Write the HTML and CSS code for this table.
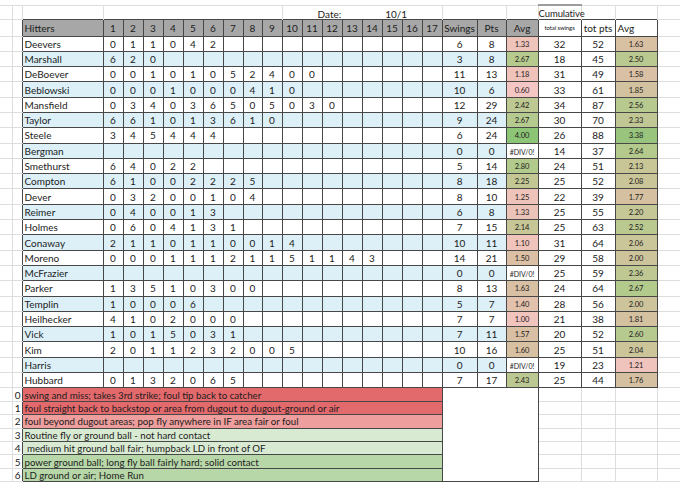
FILE: index.html
```html
<!DOCTYPE html>
<html>
<head>
<meta charset="utf-8">
<title>Hitters</title>
<link rel="stylesheet" href="styles.css">
</head>
<body>
<table class="sheet">
<colgroup>
<col class="k0"><col class="k1"><col class="kn">
<col class="kq"><col class="kq"><col class="kq"><col class="kq"><col class="kq"><col class="kq"><col class="kq"><col class="kq8"><col class="kq"><col class="kq"><col class="kq"><col class="kq"><col class="kq"><col class="kq"><col class="kq"><col class="kq"><col class="kq">
<col class="ks"><col class="kp"><col class="ka"><col class="kt"><col class="ktp"><col class="ka2"><col class="ke">
</colgroup>
<tr class="top">
<td class="t tg"></td><td class="t tg"></td><td class="t"></td><td class="t" colspan="9"></td>
<td class="t date" colspan="8"><span class="dlab">Date:</span><span class="dval">10/1</span></td>
<td class="t" colspan="2"></td><td class="t"></td><td class="t cum">Cumulative</td><td class="t"></td><td class="t"></td><td class="t te"></td>
</tr>
<tr class="hd">
<td class="g g0"></td><td class="g g1"></td><td class="nm">Hitters</td>
<td>1</td><td>2</td><td>3</td><td>4</td><td>5</td><td>6</td><td>7</td><td>8</td><td>9</td><td>10</td><td>11</td><td>12</td><td>13</td><td>14</td><td>15</td><td>16</td><td>17</td>
<td>Swings</td><td>Pts</td><td>Avg</td><td class="w tiny">total swings</td><td class="w">tot pts</td><td class="w lft">Avg</td><td class="g g9"></td>
</tr>
<tr class="r"><td class="g g0"></td><td class="g g1"></td><td class="nm">Deevers</td><td>0</td><td>1</td><td>1</td><td>0</td><td>4</td><td>2</td><td></td><td></td><td></td><td></td><td></td><td></td><td></td><td></td><td></td><td></td><td></td><td>6</td><td>8</td><td class="av" style="background:#efc4bb">1.33</td><td class="w">32</td><td class="w">52</td><td class="av" style="background:#d8c0a3">1.63</td><td class="g g9"></td></tr>
<tr class="r alt"><td class="g g0"></td><td class="g g1"></td><td class="nm">Marshall</td><td>6</td><td>2</td><td>0</td><td></td><td></td><td></td><td></td><td></td><td></td><td></td><td></td><td></td><td></td><td></td><td></td><td></td><td></td><td>3</td><td>8</td><td class="av" style="background:#b6ca8e">2.67</td><td class="w">18</td><td class="w">45</td><td class="av" style="background:#bac990">2.50</td><td class="g g9"></td></tr>
<tr class="r"><td class="g g0"></td><td class="g g1"></td><td class="nm">DeBoever</td><td>0</td><td>0</td><td>1</td><td>0</td><td>1</td><td>0</td><td>5</td><td>2</td><td>4</td><td>0</td><td>0</td><td></td><td></td><td></td><td></td><td></td><td></td><td>11</td><td>13</td><td class="av" style="background:#efc3ba">1.18</td><td class="w">31</td><td class="w">49</td><td class="av" style="background:#dac0a4">1.58</td><td class="g g9"></td></tr>
<tr class="r alt"><td class="g g0"></td><td class="g g1"></td><td class="nm">Beblowski</td><td>0</td><td>0</td><td>0</td><td>1</td><td>0</td><td>0</td><td>0</td><td>4</td><td>1</td><td>0</td><td></td><td></td><td></td><td></td><td></td><td></td><td></td><td>10</td><td>6</td><td class="av" style="background:#f4c6c4">0.60</td><td class="w">33</td><td class="w">61</td><td class="av" style="background:#d2c29f">1.85</td><td class="g g9"></td></tr>
<tr class="r"><td class="g g0"></td><td class="g g1"></td><td class="nm">Mansfield</td><td>0</td><td>3</td><td>4</td><td>0</td><td>3</td><td>6</td><td>5</td><td>0</td><td>5</td><td>0</td><td>3</td><td>0</td><td></td><td></td><td></td><td></td><td></td><td>12</td><td>29</td><td class="av" style="background:#bdc892">2.42</td><td class="w">34</td><td class="w">87</td><td class="av" style="background:#b8c98f">2.56</td><td class="g g9"></td></tr>
<tr class="r alt"><td class="g g0"></td><td class="g g1"></td><td class="nm">Taylor</td><td>6</td><td>6</td><td>1</td><td>0</td><td>1</td><td>3</td><td>6</td><td>1</td><td>0</td><td></td><td></td><td></td><td></td><td></td><td></td><td></td><td></td><td>9</td><td>24</td><td class="av" style="background:#b5ca8e">2.67</td><td class="w">30</td><td class="w">70</td><td class="av" style="background:#c0c794">2.33</td><td class="g g9"></td></tr>
<tr class="r"><td class="g g0"></td><td class="g g1"></td><td class="nm">Steele</td><td>3</td><td>4</td><td>5</td><td>4</td><td>4</td><td>4</td><td></td><td></td><td></td><td></td><td></td><td></td><td></td><td></td><td></td><td></td><td></td><td>6</td><td>24</td><td class="av" style="background:#8dc576">4.00</td><td class="w">26</td><td class="w">88</td><td class="av" style="background:#98c47d">3.38</td><td class="g g9"></td></tr>
<tr class="r alt"><td class="g g0"></td><td class="g g1"></td><td class="nm">Bergman</td><td></td><td></td><td></td><td></td><td></td><td></td><td></td><td></td><td></td><td></td><td></td><td></td><td></td><td></td><td></td><td></td><td></td><td>0</td><td>0</td><td class="av dv">#DIV/0!</td><td class="w">14</td><td class="w">37</td><td class="av" style="background:#b4ca8d">2.64</td><td class="g g9"></td></tr>
<tr class="r"><td class="g g0"></td><td class="g g1"></td><td class="nm">Smethurst</td><td>6</td><td>4</td><td>0</td><td>2</td><td>2</td><td></td><td></td><td></td><td></td><td></td><td></td><td></td><td></td><td></td><td></td><td></td><td></td><td>5</td><td>14</td><td class="av" style="background:#b2ca8c">2.80</td><td class="w">24</td><td class="w">51</td><td class="av" style="background:#c8c697">2.13</td><td class="g g9"></td></tr>
<tr class="r alt"><td class="g g0"></td><td class="g g1"></td><td class="nm">Compton</td><td>6</td><td>1</td><td>0</td><td>0</td><td>2</td><td>2</td><td>2</td><td>5</td><td></td><td></td><td></td><td></td><td></td><td></td><td></td><td></td><td></td><td>8</td><td>18</td><td class="av" style="background:#c2c794">2.25</td><td class="w">25</td><td class="w">52</td><td class="av" style="background:#cac599">2.08</td><td class="g g9"></td></tr>
<tr class="r"><td class="g g0"></td><td class="g g1"></td><td class="nm">Dever</td><td>0</td><td>3</td><td>2</td><td>0</td><td>0</td><td>1</td><td>0</td><td>4</td><td></td><td></td><td></td><td></td><td></td><td></td><td></td><td></td><td></td><td>8</td><td>10</td><td class="av" style="background:#eec3b9">1.25</td><td class="w">22</td><td class="w">39</td><td class="av" style="background:#d5c1a1">1.77</td><td class="g g9"></td></tr>
<tr class="r alt"><td class="g g0"></td><td class="g g1"></td><td class="nm">Reimer</td><td>0</td><td>4</td><td>0</td><td>0</td><td>1</td><td>3</td><td></td><td></td><td></td><td></td><td></td><td></td><td></td><td></td><td></td><td></td><td></td><td>6</td><td>8</td><td class="av" style="background:#ecc3b8">1.33</td><td class="w">25</td><td class="w">55</td><td class="av" style="background:#c5c796">2.20</td><td class="g g9"></td></tr>
<tr class="r"><td class="g g0"></td><td class="g g1"></td><td class="nm">Holmes</td><td>0</td><td>6</td><td>0</td><td>4</td><td>1</td><td>3</td><td>1</td><td></td><td></td><td></td><td></td><td></td><td></td><td></td><td></td><td></td><td></td><td>7</td><td>15</td><td class="av" style="background:#c6c696">2.14</td><td class="w">25</td><td class="w">63</td><td class="av" style="background:#b9c98f">2.52</td><td class="g g9"></td></tr>
<tr class="r alt"><td class="g g0"></td><td class="g g1"></td><td class="nm">Conaway</td><td>2</td><td>1</td><td>1</td><td>0</td><td>1</td><td>1</td><td>0</td><td>0</td><td>1</td><td>4</td><td></td><td></td><td></td><td></td><td></td><td></td><td></td><td>10</td><td>11</td><td class="av" style="background:#f0c3bb">1.10</td><td class="w">31</td><td class="w">64</td><td class="av" style="background:#cbc59a">2.06</td><td class="g g9"></td></tr>
<tr class="r"><td class="g g0"></td><td class="g g1"></td><td class="nm">Moreno</td><td>0</td><td>0</td><td>0</td><td>1</td><td>1</td><td>1</td><td>2</td><td>1</td><td>1</td><td>5</td><td>1</td><td>1</td><td>4</td><td>3</td><td></td><td></td><td></td><td>14</td><td>21</td><td class="av" style="background:#dcc0a6">1.50</td><td class="w">29</td><td class="w">58</td><td class="av" style="background:#cdc49b">2.00</td><td class="g g9"></td></tr>
<tr class="r alt"><td class="g g0"></td><td class="g g1"></td><td class="nm">McFrazier</td><td></td><td></td><td></td><td></td><td></td><td></td><td></td><td></td><td></td><td></td><td></td><td></td><td></td><td></td><td></td><td></td><td></td><td>0</td><td>0</td><td class="av dv">#DIV/0!</td><td class="w">25</td><td class="w">59</td><td class="av" style="background:#bfc893">2.36</td><td class="g g9"></td></tr>
<tr class="r"><td class="g g0"></td><td class="g g1"></td><td class="nm">Parker</td><td>1</td><td>3</td><td>5</td><td>1</td><td>0</td><td>3</td><td>0</td><td>0</td><td></td><td></td><td></td><td></td><td></td><td></td><td></td><td></td><td></td><td>8</td><td>13</td><td class="av" style="background:#d7c0a3">1.63</td><td class="w">24</td><td class="w">64</td><td class="av" style="background:#b3ca8d">2.67</td><td class="g g9"></td></tr>
<tr class="r alt"><td class="g g0"></td><td class="g g1"></td><td class="nm">Templin</td><td>1</td><td>0</td><td>0</td><td>0</td><td>6</td><td></td><td></td><td></td><td></td><td></td><td></td><td></td><td></td><td></td><td></td><td></td><td></td><td>5</td><td>7</td><td class="av" style="background:#e3c2ad">1.40</td><td class="w">28</td><td class="w">56</td><td class="av" style="background:#cdc49b">2.00</td><td class="g g9"></td></tr>
<tr class="r"><td class="g g0"></td><td class="g g1"></td><td class="nm">Heilhecker</td><td>4</td><td>1</td><td>0</td><td>2</td><td>0</td><td>0</td><td>0</td><td></td><td></td><td></td><td></td><td></td><td></td><td></td><td></td><td></td><td></td><td>7</td><td>7</td><td class="av" style="background:#f1c4be">1.00</td><td class="w">21</td><td class="w">38</td><td class="av" style="background:#d4c1a0">1.81</td><td class="g g9"></td></tr>
<tr class="r alt"><td class="g g0"></td><td class="g g1"></td><td class="nm">Vick</td><td>1</td><td>0</td><td>1</td><td>5</td><td>0</td><td>3</td><td>1</td><td></td><td></td><td></td><td></td><td></td><td></td><td></td><td></td><td></td><td></td><td>7</td><td>11</td><td class="av" style="background:#d9c0a4">1.57</td><td class="w">20</td><td class="w">52</td><td class="av" style="background:#b6c98e">2.60</td><td class="g g9"></td></tr>
<tr class="r"><td class="g g0"></td><td class="g g1"></td><td class="nm">Kim</td><td>2</td><td>0</td><td>1</td><td>1</td><td>2</td><td>3</td><td>2</td><td>0</td><td>0</td><td>5</td><td></td><td></td><td></td><td></td><td></td><td></td><td></td><td>10</td><td>16</td><td class="av" style="background:#d8c0a3">1.60</td><td class="w">25</td><td class="w">51</td><td class="av" style="background:#ccc59a">2.04</td><td class="g g9"></td></tr>
<tr class="r alt"><td class="g g0"></td><td class="g g1"></td><td class="nm">Harris</td><td></td><td></td><td></td><td></td><td></td><td></td><td></td><td></td><td></td><td></td><td></td><td></td><td></td><td></td><td></td><td></td><td></td><td>0</td><td>0</td><td class="av dv">#DIV/0!</td><td class="w">19</td><td class="w">23</td><td class="av" style="background:#efc4bc">1.21</td><td class="g g9"></td></tr>
<tr class="r"><td class="g g0"></td><td class="g g1"></td><td class="nm">Hubbard</td><td>0</td><td>1</td><td>3</td><td>2</td><td>0</td><td>6</td><td>5</td><td></td><td></td><td></td><td></td><td></td><td></td><td></td><td></td><td></td><td></td><td>7</td><td>17</td><td class="av" style="background:#bcc892">2.43</td><td class="w">25</td><td class="w">44</td><td class="av" style="background:#d5c1a1">1.76</td><td class="g g9"></td></tr>
<tr class="lg"><td class="g g0"></td><td class="ln">0</td><td class="lt l0" colspan="18">swing and miss; takes 3rd strike; foul tip back to catcher</td><td class="box" colspan="3" rowspan="7"></td><td class="lf"></td><td class="lf"></td><td class="lf"></td><td class="g g9"></td></tr>
<tr class="lg"><td class="g g0"></td><td class="ln">1</td><td class="lt l0" colspan="18">foul straight back to backstop or area from dugout to dugout-ground or air</td><td class="lf"></td><td class="lf"></td><td class="lf"></td><td class="g g9"></td></tr>
<tr class="lg"><td class="g g0"></td><td class="ln">2</td><td class="lt l2" colspan="18">foul beyond dugout areas; pop fly anywhere in IF area fair or foul</td><td class="lf"></td><td class="lf"></td><td class="lf"></td><td class="g g9"></td></tr>
<tr class="lg"><td class="g g0"></td><td class="ln">3</td><td class="lt l3" colspan="18">Routine fly or ground ball - not hard contact</td><td class="lf"></td><td class="lf"></td><td class="lf"></td><td class="g g9"></td></tr>
<tr class="lg"><td class="g g0"></td><td class="ln">4</td><td class="lt l3" colspan="18">&nbsp;medium hit ground ball fair; humpback LD in front of OF</td><td class="lf"></td><td class="lf"></td><td class="lf"></td><td class="g g9"></td></tr>
<tr class="lg"><td class="g g0"></td><td class="ln">5</td><td class="lt l5" colspan="18">power ground ball; long fly ball fairly hard; solid contact</td><td class="lf"></td><td class="lf"></td><td class="lf"></td><td class="g g9"></td></tr>
<tr class="lg"><td class="g g0"></td><td class="ln">6</td><td class="lt l5" colspan="18">LD ground or air; Home Run</td><td class="lf"></td><td class="lf"></td><td class="lf"></td><td class="g g9"></td></tr>
</table>
</body>
</html>
```

FILE: styles.css
```css
* { box-sizing: border-box; }
body {
  margin: 0;
  background: #fff;
  font-family: Lato, "Open Sans", "DejaVu Sans", sans-serif;
  color: #1c1c1c;
}
.sheet {
  border-collapse: collapse;
  table-layout: fixed;
  width: 680px;
  margin-top: 4px;
}
.sheet td {
  padding: 0;
  font-size: 10px;
  line-height: 10px;
  text-align: center;
  white-space: nowrap;
  overflow: hidden;
}
.k0 { width: 12px; }
.k1 { width: 10px; }
.kn { width: 81px; }
.kq { width: 20px; }
.kq8 { width: 19px; }
.ks { width: 35px; }
.kp { width: 29px; }
.ka { width: 32px; }
.kt { width: 43px; }
.ktp { width: 34px; }
.ka2 { width: 42px; }
.ke { width: 23px; }

/* top row */
.top { height: 14px; }
.sheet .t {
  border-top: 1px solid #dedede;
  border-right: 1px solid #dedede;
  vertical-align: bottom;
}
.sheet .tg, .sheet .te { border-bottom: 1px solid #dedede; }
.sheet .te { border-right: none; }
.sheet .date { text-align: left; overflow: visible; }
.dlab { margin-left: 35px; }
.dval { margin-left: 44px; }
.sheet .cum {
  border-top: 2px solid #9c9c9c;
  overflow: visible;
  font-size: 9.5px;
  letter-spacing: -0.1px;
}

/* table body */
.hd { height: 17px; }
.r { height: 15.3px; }
.hd td, .r td {
  border: 1px solid #474747;
}
.hd td { background: #a7a7a7; }
.alt td { background: #ddf0f8; }
.sheet .w { background: #fff; }
.sheet .dv { background: #fff; }
.sheet .nm { text-align: left; padding-left: 2px; }
.sheet .lft { text-align: left; padding-left: 2px; }
.sheet .tiny { font-size: 6px; letter-spacing: -0.1px; }
.sheet .av { font-size: 7.5px; padding-top: 2px; }
.sheet .dv { font-size: 7px; }

/* spreadsheet gutter gridlines */
.sheet .g {
  background: #fff;
  border: none;
  border-bottom: 1px solid #dedede;
}
.sheet .g0 { border-right: 1px solid #dedede; }

/* legend */
.lg { height: 13.43px; }
.sheet .ln {
  text-align: right;
  padding-right: 1px;
  border-bottom: 1px solid #dedede;
}
.sheet .lt {
  text-align: left;
  padding-left: 2px;
  font-size: 9.7px;
  border: 1px solid #474747;
}
.l0 { background: #e36a6c; }
.l2 { background: #ee9e9d; }
.l3 { background: #d9ead3; }
.l5 { background: #b7d7a8; }
.sheet .box {
  border: 1px solid #474747;
  background: #fff;
}
.sheet .lf {
  border-right: 1px solid #dedede;
  border-bottom: 1px solid #dedede;
}
```
